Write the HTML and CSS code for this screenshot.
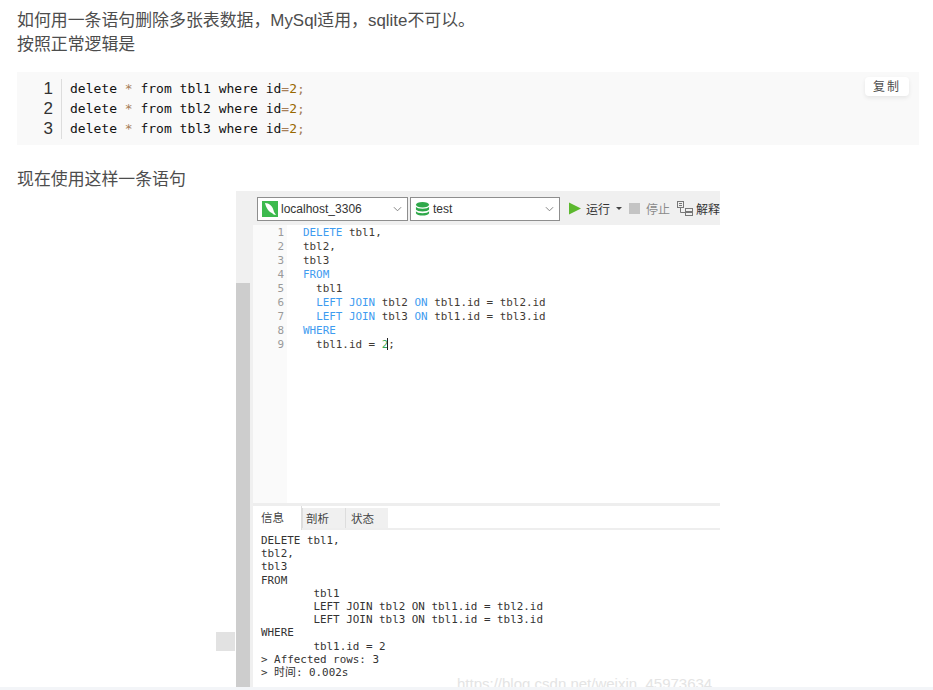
FILE: index.html
```html
<!DOCTYPE html>
<html lang="en">
<head>
  <meta charset="UTF-8" />
  <title>如何用一条语句删除多张表数据</title>
  <link rel="stylesheet" href="styles.css">
</head>
<body>
  <div class="article">
    <p class="intro">如何用一条语句删除多张表数据，MySql适用，sqlite不可以。<br>按照正常逻辑是</p>

    <!-- Code block -->
    <div class="code-block">
      <ol class="line-nums"><li>1</li><li>2</li><li>3</li></ol>
      <pre class="code">delete <span class="op">*</span> from tbl1 where id<span class="op">=</span><span class="num">2</span><span class="op">;</span>
delete <span class="op">*</span> from tbl2 where id<span class="op">=</span><span class="num">2</span><span class="op">;</span>
delete <span class="op">*</span> from tbl3 where id<span class="op">=</span><span class="num">2</span><span class="op">;</span></pre>
      <button class="copy-btn">复制</button>
    </div>

    <p class="after">现在使用这样一条语句</p>

    <!-- Screenshot of the query window -->
    <div class="shot">
      <div class="shot-marker"></div>
      <div class="shot-rail"><div class="shot-thumb"></div></div>
      <div class="shot-main">
        <div class="toolbar">
          <div class="select select-conn">
            <svg class="select-icon" viewBox="0 0 16 16"><rect width="16" height="16" fill="#3dba4e"/><path d="M3 2c4 0 8 3 9 9l2 3c-2 0-3-1-4-2C7 11 4 7 3 2z" fill="#fff"/></svg>
            <span>localhost_3306</span>
            <svg class="chev" viewBox="0 0 10 6"><path d="M1 1l4 4 4-4" fill="none" stroke="#777"/></svg>
          </div>
          <div class="select select-db">
            <svg class="select-icon" viewBox="0 0 16 16"><g fill="#2fa84a"><ellipse cx="8" cy="3.500" rx="7" ry="3"/><path d="M1 5.500c1 2.800 13 2.800 14 0v3c-1 2.800-13 2.800-14 0z"/><path d="M1 10.500c1 2.800 13 2.800 14 0v2c-1 3.400-13 3.400-14 0z"/></g></svg>
            <span>test</span>
            <svg class="chev" viewBox="0 0 10 6"><path d="M1 1l4 4 4-4" fill="none" stroke="#777"/></svg>
          </div>
          <div class="tool">
            <svg class="tool-run" viewBox="0 0 12 12"><path d="M0 0l12 6-12 6z" fill="#5cb82e"/></svg>
            <span>运行</span>
            <svg class="tool-caret" viewBox="0 0 6 3"><path d="M0 0h6L3 3z" fill="#444"/></svg>
          </div>
          <div class="tool tool-off">
            <span class="tool-stop"></span>
            <span>停止</span>
          </div>
          <div class="tool">
            <svg class="tool-explain" viewBox="0 0 16 15" fill="none" stroke="#777"><rect x=".5" y=".5" width="6" height="6"/><path d="M2 2.500h3M2 4.500h3M3.500 7v4.500H8"/><rect x="8.500" y="7.500" width="7" height="3"/><rect x="8.500" y="11.500" width="7" height="3"/></svg>
            <span>解释</span>
          </div>
        </div>

        <div class="editor">
          <ol class="ed-nums"><li>1</li><li>2</li><li>3</li><li>4</li><li>5</li><li>6</li><li>7</li><li>8</li><li>9</li></ol>
          <pre class="ed-code"><span class="kw">DELETE</span> tbl1,
tbl2,
tbl3
<span class="kw">FROM</span>
  tbl1
  <span class="kw">LEFT JOIN</span> tbl2 <span class="kw">ON</span> tbl1.id = tbl2.id
  <span class="kw">LEFT JOIN</span> tbl3 <span class="kw">ON</span> tbl1.id = tbl3.id
<span class="kw">WHERE</span>
  tbl1.id = <span class="lit">2</span><span class="caret"></span>;</pre>
        </div>

        <div class="tabs">
          <div class="tab tab-active">信息</div>
          <div class="tab">剖析</div>
          <div class="tab">状态</div>
        </div>

        <pre class="result">DELETE tbl1,
tbl2,
tbl3
FROM
        tbl1
        LEFT JOIN tbl2 ON tbl1.id = tbl2.id
        LEFT JOIN tbl3 ON tbl1.id = tbl3.id
WHERE
        tbl1.id = 2
&gt; Affected rows: 3
&gt; 时间: 0.002s</pre>
      </div>
      <div class="watermark">https://blog.csdn.net/weixin_45973634</div>
    </div>
  </div>
  <div class="bottom-strip"></div>
</body>
</html>
```

FILE: styles.css
```css
* { margin: 0; padding: 0; box-sizing: border-box; }

html, body {
  height: 100%;
  overflow: hidden;
}

body {
  display: flex;
  flex-direction: column;
  background: #fff;
  color: #4d4d4d;
  font-family: "Liberation Sans", "Noto Sans CJK SC", sans-serif;
}

ol { list-style: none; }

.article {
  flex: 1;
  min-height: 0;
  overflow: hidden;
  padding: 9px 14px 0 17px;
}

.bottom-strip {
  flex: 0 0 3px;
  background: #f3f5f8;
}

.intro, .after {
  font-size: 16.9px;
  line-height: 24px;
}

/* Code block */
.code-block {
  position: relative;
  display: flex;
  height: 73px;
  margin-top: 15px;
  padding-top: 7px;
  background: #f9f9f9;
}

.line-nums {
  width: 45px;
  height: 60px;
  padding-right: 8px;
  border-right: 1px solid #ddd;
  color: #333;
  font-size: 17px;
  line-height: 20px;
  text-align: right;
}

.code {
  padding-left: 8px;
  color: #111;
  font-family: "DejaVu Sans Mono", monospace;
  font-size: 13px;
  line-height: 20px;
}

.code .op { color: #a67f59; }
.code .num { color: #986801; }

.copy-btn {
  position: absolute;
  top: 5px;
  right: 10px;
  width: 44px;
  height: 19px;
  padding-bottom: 2px;
  border: none;
  border-radius: 4px;
  background: #fff;
  box-shadow: 0 2px 4px rgba(0, 0, 0, 0.08);
  color: #4d4d4d;
  font-family: "Noto Sans CJK SC", sans-serif;
  font-size: 12px;
  letter-spacing: 2px;
  line-height: 17px;
}

.after {
  margin-top: 24px;
  line-height: 22px;
}

/* Query window screenshot */
.shot {
  position: relative;
  display: flex;
  width: 484px;
  height: 497px;
  margin-left: 219px;
  font-family: "DejaVu Sans Mono", "Noto Sans CJK SC", monospace;
}

.shot-marker {
  position: absolute;
  top: 441px;
  left: -20px;
  width: 19px;
  height: 19px;
  background: #e2e2e2;
}

.shot-rail {
  display: flex;
  flex: 0 0 17px;
  flex-direction: column;
  justify-content: flex-end;
  padding-right: 3px;
  background: #f0f0f0;
}

.shot-thumb {
  height: 405px;
  background: #cdcdcd;
}

.shot-main {
  display: flex;
  flex: 1;
  flex-direction: column;
  min-width: 0;
}

.toolbar {
  display: flex;
  flex: 0 0 34px;
  align-items: center;
  gap: 2px;
  margin-left: -3px;
  padding: 2px 0 0 7px;
  overflow: hidden;
  background: #f0f0f0;
  color: #333;
  font-family: "Noto Sans CJK SC", sans-serif;
  font-size: 12px;
  white-space: nowrap;
}

.select {
  display: flex;
  flex: 0 0 auto;
  align-items: center;
  gap: 3px;
  height: 24px;
  padding: 0 5px 0 4px;
  border: 1px solid #8e8e8e;
  background: #fff;
  font-family: "Liberation Sans", sans-serif;
  font-size: 12px;
}

.select-conn { width: 151px; }
.select-db { width: 150px; }

.select-icon {
  flex: 0 0 auto;
  width: 16px;
  height: 16px;
}

.select-db .select-icon { width: 15px; }

.chev {
  width: 9px;
  height: 6px;
  margin-left: auto;
}

.tool {
  display: flex;
  flex: 0 0 auto;
  align-items: center;
  margin: -2px 0 0 5px;
}

.tool-off { color: #8a8a8a; }

.tool-run {
  width: 12px;
  height: 13px;
  margin: 0 5px 0 2px;
}

.tool-caret {
  width: 6px;
  height: 3px;
  margin-left: 6px;
}

.tool-stop {
  width: 11px;
  height: 11px;
  margin-right: 6px;
  background: #c4c4c4;
}

.tool-explain {
  width: 16px;
  height: 15px;
  margin-right: 3px;
}

.editor {
  display: flex;
  flex: 0 0 278px;
  padding-top: 1px;
  background: #fff;
  font-size: 10.9px;
  line-height: 14.05px;
}

.ed-nums {
  flex: 0 0 34px;
  margin-top: -1px;
  padding: 1px 3px 0 0;
  background: #fafafa;
  color: #999;
  text-align: right;
}

.ed-code {
  padding-left: 16px;
  color: #3f3a34;
  font-family: inherit;
}

.kw { color: #3f9cf0; }
.lit { color: #35a95a; }

.caret {
  display: inline-block;
  width: 1px;
  height: 12px;
  margin-left: -1px;
  background: #222;
  vertical-align: -2px;
}

.tabs {
  display: flex;
  flex: 0 0 27px;
  align-items: flex-end;
  border-top: 3px solid #eee;
  border-bottom: 2px solid #eee;
  font-family: "Noto Sans CJK SC", sans-serif;
  font-size: 11.5px;
}

.tab {
  width: 43px;
  height: 20px;
  padding-left: 3px;
  border-left: 1px solid #ddd;
  background: #f0f0f0;
  color: #444;
  line-height: 21px;
}

.tab:last-child { padding-left: 5px; }

.tab-active {
  width: 49px;
  height: 24px;
  margin-bottom: -2px;
  padding-left: 8px;
  border-left: none;
  border-right: 1px solid #ddd;
  background: #fff;
  line-height: 22px;
}

.result {
  flex: 1;
  padding: 4px 0 0 8px;
  overflow: hidden;
  color: #333;
  font-family: inherit;
  font-size: 10.9px;
  line-height: 13.2px;
}

.watermark {
  position: absolute;
  top: 484px;
  left: 221px;
  color: #e4e4e4;
  font-family: "Liberation Sans", sans-serif;
  font-size: 15px;
  line-height: 17px;
  white-space: nowrap;
}
```
